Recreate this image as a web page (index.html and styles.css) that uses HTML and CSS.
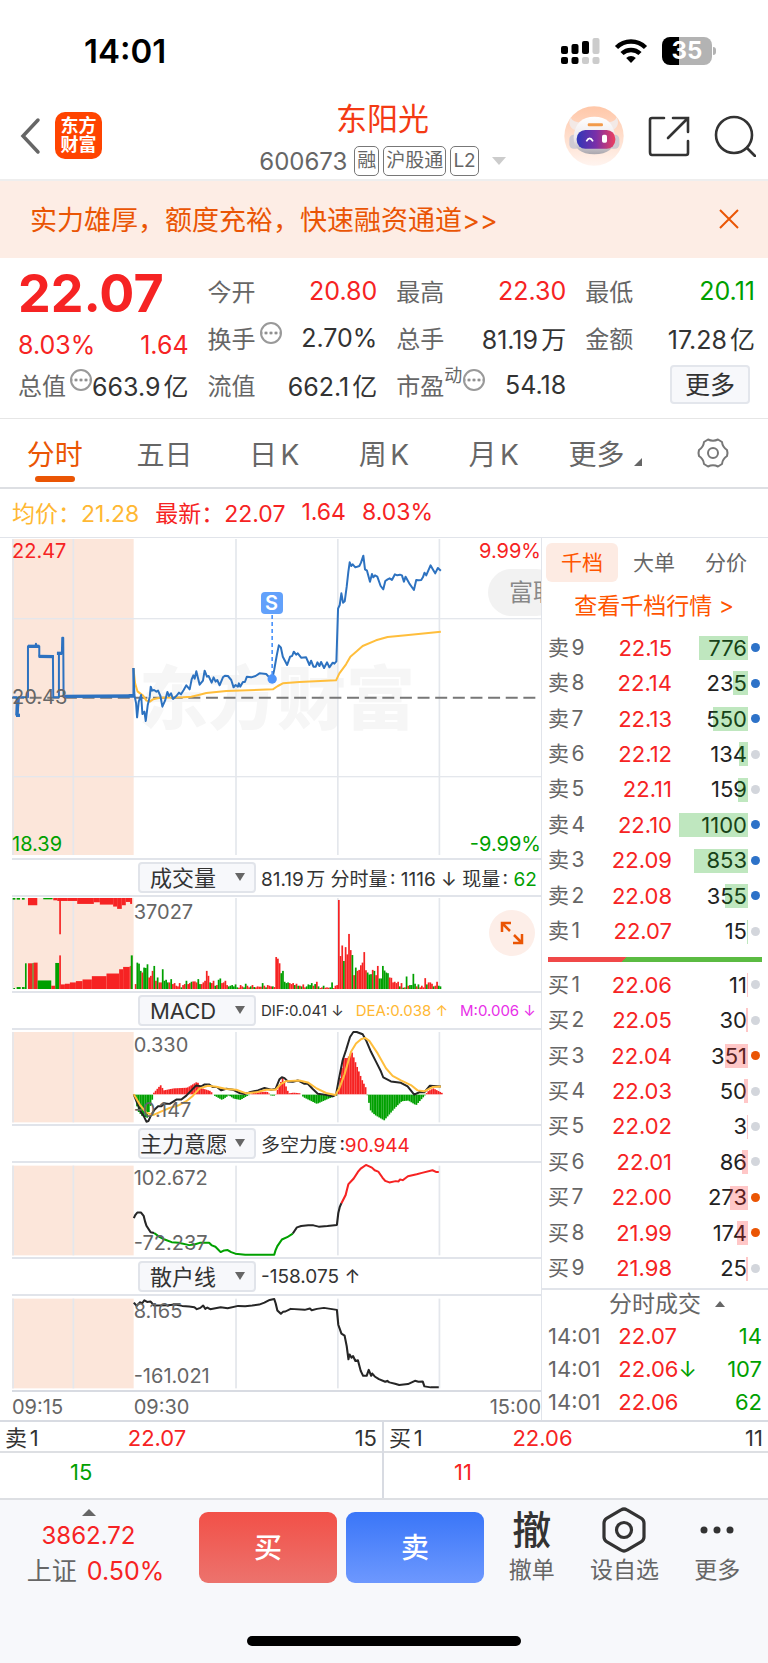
FILE: index.html
```html
<!DOCTYPE html>
<html lang="zh-CN">
<head>
    <meta charset="UTF-8">
    <meta name="viewport" content="width=device-width, initial-scale=1.0">
    <title>东阳光 600673</title>
    <link rel="stylesheet" href="styles.css">
</head>
<body>
    <div class="statusbar">
        <span class="clock">14:01</span>
        <div class="status-icons">
            <svg width="40" height="28" viewBox="0 0 40 28">
                <g fill="#000">
                    <rect x="1" y="9" width="7" height="8" rx="2"/>
                    <rect x="11.500" y="7" width="7" height="10" rx="2"/>
                    <rect x="22" y="4" width="7" height="13" rx="2"/>
                    <rect x="1" y="20" width="7" height="7" rx="2"/>
                    <rect x="11.500" y="20" width="7" height="7" rx="2"/>
                </g>
                <g fill="#ccc">
                    <rect x="32.500" y="1" width="7" height="16" rx="2"/>
                    <rect x="22" y="20" width="7" height="7" rx="2"/>
                    <rect x="32.500" y="20" width="7" height="7" rx="2"/>
                </g>
            </svg>
            <svg width="34" height="26" viewBox="0 0 34 26" fill="none" stroke="#000" stroke-width="4.500">
                <path d="M2.500 9.500a20.500 20.500 0 0 1 29 0"/>
                <path d="M8 15.500a13 13 0 0 1 18 0"/>
                <path d="M17 25l-4.800-5a7 7 0 0 1 9.600 0z" fill="#000" stroke="none"/>
            </svg>
            <div class="battery"><span>35</span></div>
        </div>
    </div>

    <header class="topbar">
        <div class="topbar-left">
            <button class="icon-btn" aria-label="返回">
                <svg width="22" height="38" viewBox="0 0 22 38" fill="none" stroke="#666" stroke-width="3.500"><path d="M19 3L4 19l15 16" stroke-linecap="round"/></svg>
            </button>
            <a class="logo" href="#">东方<br>财富</a>
        </div>
        <div class="topbar-center">
            <h1>东阳光</h1>
            <div class="stock-code">
                <span class="code">600673</span>
                <span class="tag">融</span>
                <span class="tag">沪股通</span>
                <span class="tag">L2</span>
                <svg width="14" height="8" viewBox="0 0 14 8"><path d="M0 0h14L7 8z" fill="#ccc"/></svg>
            </div>
        </div>
        <div class="topbar-right">
            <button class="icon-btn" aria-label="助手">
                <svg width="60" height="60" viewBox="0 0 180 180">
                    <defs>
                        <linearGradient id="halo" x1="0" y1="0" x2="0" y2="1"><stop offset="0" stop-color="#ffc7a8"/><stop offset="1" stop-color="#fff4ef"/></linearGradient>
                        <linearGradient id="visor" x1="0" y1="0" x2="1" y2="0"><stop offset="0" stop-color="#2f37b8"/><stop offset=".5" stop-color="#7a2fa8"/><stop offset="1" stop-color="#ee3f5e"/></linearGradient>
                        <linearGradient id="shell" x1="0" y1="0" x2="0" y2="1"><stop offset="0" stop-color="#fff"/><stop offset=".6" stop-color="#ece7ea"/><stop offset="1" stop-color="#a9a6ad"/></linearGradient>
                    </defs>
                    <circle cx="90" cy="90" r="89" fill="url(#halo)"/>
                    <path d="M20 34c-8 14-4 32 12 38l22-22c-18 0-30-5-34-16zM158 34c8 14 4 32-12 38l-22-22c18 0 30-5 34-16z" fill="#f3e9e6"/>
                    <rect x="16" y="86" width="32" height="42" rx="13" fill="#cfcbd2"/>
                    <rect x="134" y="86" width="32" height="42" rx="13" fill="#cfcbd2"/>
                    <path d="M91 32c36 0 60 20 62 62 1 34-22 51-62 51s-63-17-62-51c2-42 26-62 62-62z" fill="url(#shell)"/>
                    <rect x="71" y="52" width="46" height="9" rx="4" fill="#f29a4a"/>
                    <rect x="38" y="72" width="116" height="56" rx="26" fill="url(#visor)"/>
                    <path d="M67 106q10-18 20 0" fill="none" stroke="#fff" stroke-width="5"/>
                    <rect x="114" y="86" width="15" height="24" rx="5" fill="#fff"/>
                </svg>
            </button>
            <button class="icon-btn" aria-label="分享">
                <svg width="42" height="42" viewBox="0 0 42 42" fill="none" stroke="#333" stroke-width="2.600" stroke-linecap="round">
                    <path d="M16 3H4q-2 0-2 2v32q0 3 2 3h34q2 0 2-2V26M25 3h15v14M39 4L20 23"/>
                </svg>
            </button>
            <button class="icon-btn" aria-label="搜索">
                <svg width="42" height="42" viewBox="0 0 42 42" fill="none" stroke="#333" stroke-width="2.600" stroke-linecap="round">
                    <circle cx="20" cy="20" r="18"/><path d="M33 33l8 8"/>
                </svg>
            </button>
        </div>
    </header>

    <div class="banner">
        <a href="#">实力雄厚，额度充裕，快速融资通道&gt;&gt;</a>
        <button class="icon-btn" aria-label="关闭">
            <svg width="20" height="20" viewBox="0 0 20 20" stroke="#ea5504" stroke-width="2"><path d="M1 1l18 18M19 1L1 19"/></svg>
        </button>
    </div>

    <section class="quote">
        <div class="quote-col">
            <div class="price red">22.07</div>
            <div class="row change red"><span>8.03%</span><span>1.64</span></div>
            <div class="row"><span class="name">总值<i class="dots"></i></span><span>663.9亿</span></div>
        </div>
        <div class="quote-col">
            <div class="row"><span class="name">今开</span><span class="red">20.80</span></div>
            <div class="row"><span class="name">换手<i class="dots"></i></span><span>2.70%</span></div>
            <div class="row"><span class="name">流值</span><span>662.1亿</span></div>
        </div>
        <div class="quote-col">
            <div class="row"><span class="name">最高</span><span class="red">22.30</span></div>
            <div class="row"><span class="name">总手</span><span>81.19万</span></div>
            <div class="row"><span class="name">市盈<sup>动</sup><i class="dots"></i></span><span>54.18</span></div>
        </div>
        <div class="quote-col">
            <div class="row"><span class="name">最低</span><span class="green">20.11</span></div>
            <div class="row"><span class="name">金额</span><span>17.28亿</span></div>
            <div class="row row-end"><button class="more-btn">更多</button></div>
        </div>
    </section>

    <nav class="tabs">
        <button class="active">分时</button>
        <button>五日</button>
        <button>日K</button>
        <button>周K</button>
        <button>月K</button>
        <button class="more">更多<svg width="8" height="8" viewBox="0 0 8 8"><path d="M8 0v8H0z" fill="#666"/></svg></button>
        <button aria-label="设置">
            <svg width="32" height="32" viewBox="0 0 32 32" fill="none" stroke="#777" stroke-width="2">
                <path d="M11 2.500q5 2.500 10 0l4 2.500q.5 5 5 8l.5 3-.5 3q-4.500 3-5 8l-4 2.500q-5-2.500-10 0L7 27q-.5-5-5-8l-.5-3 .5-3q4.500-3 5-8z" stroke-linejoin="round"/>
                <circle cx="16" cy="16" r="5"/>
            </svg>
        </button>
    </nav>

    <div class="summary">
        <span class="orange">均价：21.28</span>
        <span class="red">最新：22.07</span>
        <span class="red">1.64</span>
        <span class="red">8.03%</span>
    </div>

    <main class="main">
        <div class="charts">
            <div class="chart price-chart">
                <span class="watermark">东方财富</span>
                <svg id="priceChart" viewBox="36 24 1590 960" preserveAspectRatio="none"></svg>
                <span class="label top red">22.47</span>
                <span class="label middle">20.43</span>
                <span class="label bottom green">18.39</span>
                <span class="label top right red">9.99%</span>
                <span class="label bottom right green">-9.99%</span>
                <span class="pill">富联</span>
                <span class="marker">S</span>
            </div>

            <div class="chart-head">
                <label class="picker"><select aria-label="指标一"><option>成交量</option></select></label>
                <span class="info">81.19万 分时量: 1116 ↓ 现量: <b class="green">62</b></span>
            </div>
            <div class="chart">
                <svg id="volumeChart" viewBox="36 138 1590 285" preserveAspectRatio="none"></svg>
                <span class="label top inner">37027</span>
                <button class="expand" aria-label="全屏">
                    <svg width="24" height="24" viewBox="0 0 24 24" fill="none" stroke="#ea5504" stroke-width="2.500"><path d="M2 11V2h9M2 2l8 8M22 13v9h-9M22 22l-8-8"/></svg>
                </button>
            </div>

            <div class="chart-head">
                <label class="picker"><select aria-label="指标二"><option>MACD</option></select></label>
                <span class="info small"><span>DIF:0.041 ↓</span><span class="orange">DEA:0.038 ↑</span><span class="magenta">M:0.006 ↓</span></span>
            </div>
            <div class="chart">
                <svg id="macdChart" viewBox="36 539 1590 285" preserveAspectRatio="none"></svg>
                <span class="label top inner">0.330</span>
                <span class="label bottom inner">-0.147</span>
            </div>

            <div class="chart-head">
                <label class="picker"><select aria-label="指标三"><option>主力意愿</option></select></label>
                <span class="info">多空力度:<b class="red">90.944</b></span>
            </div>
            <div class="chart">
                <svg id="forceChart" viewBox="34 98 1511 285" preserveAspectRatio="none"></svg>
                <span class="label top inner">102.672</span>
                <span class="label bottom inner">-72.237</span>
            </div>

            <div class="chart-head">
                <label class="picker"><select aria-label="指标四"><option>散户线</option></select></label>
                <span class="info">-158.075 ↑</span>
            </div>
            <div class="chart">
                <svg id="retailChart" viewBox="34 498 1511 285" preserveAspectRatio="none"></svg>
                <span class="label top inner">8.165</span>
                <span class="label bottom inner">-161.021</span>
            </div>

            <div class="times"><span>09:15</span><span>09:30</span><span>15:00</span></div>
        </div>

        <aside class="side">
            <div class="side-tabs">
                <button class="active">千档</button>
                <button>大单</button>
                <button>分价</button>
            </div>
            <a class="side-link" href="#">查看千档行情 &gt;</a>
            <table class="book sell"><tbody id="sellBook"></tbody></table>
            <div class="ratio"></div>
            <table class="book buy"><tbody id="buyBook"></tbody></table>
            <button class="deals-title">分时成交<svg width="10" height="6" viewBox="0 0 10 6"><path d="M5 0l5 6H0z" fill="#666"/></svg></button>
            <table class="deals">
                <tbody>
                    <tr><td>14:01</td><td class="red">22.07</td><td class="green">14</td></tr>
                    <tr><td>14:01</td><td class="red">22.06<span class="green">↓</span></td><td class="green">107</td></tr>
                    <tr><td>14:01</td><td class="red">22.06</td><td class="green">62</td></tr>
                </tbody>
            </table>
        </aside>
    </main>

    <section class="level">
        <div class="level-side">
            <div class="level-row"><span>卖1</span><span class="red">22.07</span><span>15</span></div>
            <div class="level-queue green">15</div>
        </div>
        <div class="level-side">
            <div class="level-row"><span>买1</span><span class="red">22.06</span><span>11</span></div>
            <div class="level-queue red">11</div>
        </div>
    </section>

    <footer class="footer">
        <div class="actions">
            <button class="index">
                <svg width="14" height="7" viewBox="0 0 14 7"><path d="M7 0l7 7H0z" fill="#666"/></svg>
                <span class="red">3862.72</span>
                <span class="index-change">上证 <b class="red">0.50%</b></span>
            </button>
            <button class="trade buy-btn">买</button>
            <button class="trade sell-btn">卖</button>
            <button class="tool"><span class="glyph">撤</span>撤单</button>
            <button class="tool">
                <svg width="44" height="46" viewBox="0 0 44 46" fill="none" stroke="#333" stroke-width="3.200">
                    <path d="M19 3q3-2 6 0l14 8q3 2 3 5v14q0 3-3 5l-14 8q-3 2-6 0L5 35q-3-2-3-5V16q0-3 3-5z"/>
                    <circle cx="22" cy="23" r="7.500"/>
                </svg>
                设自选
            </button>
            <button class="tool">
                <svg width="44" height="46" viewBox="0 0 44 46" fill="#333"><circle cx="9" cy="23" r="3.500"/><circle cx="22" cy="23" r="3.500"/><circle cx="35" cy="23" r="3.500"/></svg>
                更多
            </button>
        </div>
        <div class="home-bar"></div>
    </footer>

    <script src="charts.js"></script>
</body>
</html>
```
FILE: styles.css
```css
* {
    box-sizing: border-box;
}
body {
    margin: 0;
    background: #fff;
    color: #333;
    font-family: Inter, "Noto Sans CJK SC", sans-serif;
    font-size: 24px;
    text-autospace: normal;
}
button, select {
    font: inherit;
    color: inherit;
    background: none;
    border: none;
    padding: 0;
    margin: 0;
}
a {
    text-decoration: none;
}
svg {
    display: block;
}
b, i {
    font-weight: normal;
    font-style: normal;
}
.red { color: #f62323; }
.green { color: #00a000; }
.orange { color: #ffb833; }
.magenta { color: #e830e8; }

/* status bar */
.statusbar {
    display: flex;
    justify-content: space-between;
    align-items: center;
    height: 100px;
    padding: 2px 56px 0 84px;
}
.clock {
    font-size: 33px;
    font-weight: 600;
    color: #000;
}
.status-icons {
    display: flex;
    align-items: center;
    gap: 14px;
}
.battery {
    position: relative;
    width: 50px;
    height: 28px;
    border-radius: 8px;
    background: linear-gradient(to right, #000 35%, #b3b3b3 35%);
    color: #fff;
    font-size: 24px;
    font-weight: 700;
    line-height: 28px;
    text-align: center;
}
.battery::after {
    content: "";
    position: absolute;
    right: -4px;
    top: 10px;
    width: 3px;
    height: 8px;
    border-radius: 0 3px 3px 0;
    background: #b3b3b3;
}

/* top bar */
.topbar {
    display: grid;
    grid-template-columns: 1fr auto 1fr;
    height: 81px;
    padding: 0 12px 0 19px;
    border-bottom: 2px solid #eee;
}
.topbar-left, .topbar-right {
    display: flex;
    align-items: center;
    padding-bottom: 8px;
}
.topbar-left {
    gap: 14px;
}
.topbar-right {
    justify-content: flex-end;
    gap: 24px;
}
.logo {
    width: 47px;
    height: 47px;
    padding-top: 4px;
    border-radius: 10px;
    background: #ff4400;
    color: #fff;
    font-size: 18px;
    font-weight: 700;
    line-height: 19px;
    text-align: center;
}
.topbar-center {
    display: flex;
    flex-direction: column;
    align-items: center;
    gap: 9px;
    padding-right: 10px;
}
h1 {
    margin: 0;
    color: #f43a14;
    font-size: 31px;
    font-weight: 400;
    line-height: 37px;
}
.stock-code {
    display: flex;
    align-items: center;
    gap: 4px;
    color: #666;
}
.stock-code svg {
    margin-left: 9px;
}
.code {
    margin-right: 3px;
}
.tag {
    height: 30px;
    padding: 0 2px;
    border: 1px solid #777;
    border-radius: 5px;
    font-size: 19px;
    line-height: 28px;
}

.banner {
    display: flex;
    justify-content: space-between;
    align-items: center;
    height: 77px;
    padding: 0 29px 2px 30px;
    background: #fdede5;
}
.banner a {
    color: #ea5504;
    font-size: 27px;
}

/* quote */
.quote {
    display: grid;
    grid-template-columns: repeat(4, 1fr);
    gap: 19px;
    padding: 9px 13px 10px 18px;
    border-bottom: 1px solid #e6e6e6;
}
.price {
    height: 61px;
    font-size: 52px;
    font-weight: 700;
    line-height: 54px;
}
.row {
    display: flex;
    justify-content: space-between;
    align-items: center;
    height: 47px;
    font-size: 25px;
    white-space: nowrap;
}
.row.change {
    height: 33px;
}
.row-end {
    justify-content: flex-end;
    padding-right: 5px;
}
.name {
    display: flex;
    align-items: center;
    color: #666;
    font-size: 24px;
}
.name sup {
    font-size: 18px;
    line-height: 18px;
    align-self: flex-start;
}
.dots {
    width: 22px;
    height: 22px;
    margin: 0 0 10px 4px;
    border: 2px solid #999;
    border-radius: 50%;
    background: radial-gradient(circle, #888 1px, transparent 2px) center / 5px 18px;
    background-repeat: repeat-x;
}
sup + .dots {
    margin-left: 1px;
}
.more-btn {
    width: 80px;
    height: 39px;
    border: 2px solid #e3e6ec;
    border-radius: 4px;
    background: #f7f8fb;
    line-height: 32px;
}

/* period tabs */
.tabs {
    display: grid;
    grid-template-columns: repeat(7, 1fr);
    height: 70px;
    border-bottom: 2px solid #dddfe3;
}
.tabs button {
    position: relative;
    display: flex;
    align-items: center;
    justify-content: center;
    font-size: 28px;
    color: #666;
}
.tabs .active {
    color: #ea5504;
}
.tabs .active::after {
    content: "";
    position: absolute;
    bottom: 5px;
    width: 40px;
    height: 6px;
    border-radius: 3px;
    background: #ea5504;
}
.tabs .more {
    padding-left: 4px;
}
.tabs .more svg {
    margin: 18px 0 0 10px;
}
.summary {
    display: flex;
    align-items: center;
    gap: 16px;
    height: 48px;
    padding: 0 0 2px 12px;
    font-size: 23px;
}

/* charts */
.main {
    display: grid;
    grid-template-columns: minmax(0, 1fr) 226px;
    border-bottom: 2px solid #d8dbe2;
}
.charts {
    padding-left: 12px;
    border-top: 1px solid #e1e4ea;
    border-right: 1px solid #e1e4ea;
}
.chart {
    position: relative;
    height: 94px;
    overflow: hidden;
}
.chart > svg {
    position: relative;
    width: 100%;
    height: 100%;
}
.price-chart {
    height: 320px;
}
.label {
    position: absolute;
    left: 0;
    color: #666;
    font-size: 20px;
    line-height: 24px;
}
.label.red { color: #f62323; }
.label.green { color: #00a000; }
.label.top { top: 1px; }
.label.middle { top: 147px; }
.label.bottom { bottom: 2px; }
.label.right {
    left: auto;
    right: 0;
}
.label.inner {
    left: 23%;
}
.label.top.inner {
    top: 3px;
}
.watermark {
    position: absolute;
    left: 24%;
    top: 106px;
    color: #f6f6f6;
    font-family: "Noto Sans CJK SC", sans-serif;
    font-size: 69px;
    font-weight: 900;
    line-height: 100px;
}
.pill {
    position: absolute;
    right: -19px;
    top: 31px;
    padding: 0 3px 0 21px;
    border-radius: 24px;
    background: #f2f2f2;
    color: #888;
    font-size: 24px;
    line-height: 47px;
}
.marker {
    position: absolute;
    left: 47%;
    top: 54px;
    width: 22px;
    border-radius: 4px;
    background: #62a1fb;
    color: #fff;
    font-size: 20px;
    font-weight: 600;
    line-height: 22px;
    text-align: center;
}
.expand {
    position: absolute;
    right: 6px;
    top: 13px;
    display: grid;
    place-items: center;
    width: 46px;
    height: 46px;
    border-radius: 50%;
    background: #fdeee8;
}
.chart-head {
    display: flex;
    align-items: center;
    gap: 5px;
    height: 39px;
    padding-left: 126px;
    border-top: 2px solid #e1e4ea;
    border-bottom: 2px solid #e1e4ea;
}
.picker {
    position: relative;
}
.picker::after {
    content: "";
    position: absolute;
    right: 11px;
    top: 11px;
    border: 5px solid transparent;
    border-top: 8px solid #666;
    border-bottom: none;
}
.picker select {
    appearance: none;
    display: block;
    width: 118px;
    height: 31px;
    padding-right: 28px;
    border: 2px solid #e1e4ea;
    border-radius: 4px;
    background: #f7f8fb;
    font-size: 22px;
    text-align-last: center;
}
.info {
    font-size: 19px;
    white-space: nowrap;
}
.info.small {
    display: flex;
    gap: 12px;
    font-size: 15px;
}
.times {
    display: grid;
    grid-template-columns: 23% 1fr auto;
    height: 30px;
    border-top: 2px solid #d8dbe2;
    color: #666;
    font-size: 20px;
    line-height: 30px;
}

/* order book */
.side {
    padding: 5px 6px 0 4px;
    border-top: 1px solid #e1e4ea;
}
.side-tabs {
    display: grid;
    grid-template-columns: repeat(3, 1fr);
    height: 39px;
    color: #666;
    font-size: 21px;
}
.side-tabs button {
    padding-bottom: 4px;
}
.side-tabs .active {
    border-radius: 6px;
    background: #fdebe3;
    color: #ff5500;
}
.side-link {
    display: block;
    color: #ff5500;
    font-size: 23px;
    line-height: 48px;
    text-align: center;
}
.book, .deals {
    width: 100%;
    border-collapse: collapse;
    font-size: 22px;
    line-height: 24px;
}
.book {
    height: 319px;
}
td {
    padding: 0;
    text-align: right;
}
td:first-child {
    width: 54px;
    padding-left: 2px;
    color: #666;
    text-align: left;
}
.book td:first-child {
    font-size: 21px;
}
.book .qty {
    position: relative;
    width: 75px;
    color: #222;
}
.bar {
    position: absolute;
    right: -1px;
    top: 6px;
    height: 24px;
}
.sell .bar { background: rgba(0, 160, 0, 0.25); }
.buy .bar { background: rgba(255, 30, 30, 0.25); }
.book .mark {
    width: 15px;
}
.dot {
    display: block;
    width: 9px;
    height: 9px;
    margin: 0 2px 0 auto;
    border-radius: 50%;
    background: #d3d6dc;
}
.sell .dot.big { background: #2d72c8; }
.buy .dot.big { background: #ea5504; }
.ratio {
    height: 5px;
    margin: 8px 0 5px 2px;
    background: linear-gradient(135deg, #f04848 36%, #5bbb42 36%);
}
.deals-title {
    display: flex;
    align-items: center;
    justify-content: center;
    gap: 14px;
    width: calc(100% + 10px);
    height: 31px;
    margin: 2px -6px 0 -4px;
    padding: 0 0 2px 24px;
    border-top: 2px solid #e1e4ea;
    color: #666;
    font-size: 23px;
    line-height: 26px;
}
.deals {
    height: 100px;
}
.deals td:nth-child(2) {
    width: 90px;
    padding-left: 18px;
    text-align: left;
    white-space: nowrap;
}

/* first level */
.level {
    display: grid;
    grid-template-columns: 1fr 1fr;
    border-bottom: 2px solid #dddfe3;
    font-size: 22px;
}
.level-side:first-child {
    border-right: 2px solid #d8dbe2;
}
.level-row {
    display: grid;
    grid-template-columns: 33% 1fr auto;
    height: 31px;
    padding: 0 5px;
    border-bottom: 2px solid #dddfe3;
    line-height: 32px;
}
.level-queue {
    height: 45px;
    padding-left: 70px;
    line-height: 38px;
}

/* footer */
.footer {
    height: 164px;
    background: #f7f8fb;
}
.actions {
    display: grid;
    grid-template-columns: 181px 138px 138px repeat(3, 1fr);
    column-gap: 9px;
    padding: 12px 6px 0 9px;
    color: #666;
}
.index {
    display: flex;
    flex-direction: column;
    align-items: center;
    gap: 3px;
    padding-right: 22px;
    line-height: 33px;
}
.index svg {
    margin-top: -3px;
}
.index-change {
    display: flex;
    gap: 10px;
    padding-left: 14px;
    font-size: 25px;
}
.trade {
    height: 71px;
    padding-bottom: 4px;
    border-radius: 9px;
    color: #fff;
    font-size: 28px;
    font-weight: 500;
}
.buy-btn { background: linear-gradient(#f25048, #ec736d); }
.sell-btn { background: linear-gradient(#3a76f8, #6d98fe); }
.tool {
    display: flex;
    flex-direction: column;
    align-items: center;
    gap: 4px;
    margin: -5px 0 0 -6px;
    font-size: 23px;
    line-height: 26px;
    white-space: nowrap;
}
.glyph {
    color: #333;
    font-size: 39px;
    font-weight: 500;
    line-height: 46px;
}
.home-bar {
    width: 274px;
    height: 10px;
    margin: 48px auto 0;
    border-radius: 5px;
    background: #000;
}
```
FILE: charts.js
```js
const RED = "#f62323";
const GREEN = "#00a000";
const BLUE = "#2d72c0";
const ORANGE = "#ffbe3c";
const BLACK = "#262626";

const rect = (x, y, w, h, fill) => `<rect x="${x}" y="${y}" width="${w}" height="${h}" fill="${fill}"/>`;
const line = (points, color, width = 6) => `<polyline points="${points}" fill="none" stroke="${color}" stroke-width="${width}" stroke-linejoin="round"/>`;

// call auction background and vertical grid lines
function grid(x, y, w, h) {
    let out = rect(x, y, w * 0.23, h, "#fce6da");
    [0.001, 0.115, 0.4225, 0.615, 0.807].forEach(p => {
        out += rect(x + w * p - 1, y, 5, h, "#e4e7ec");
    });
    return out;
}

// price
const auction = "38,502 50,502 50,556 54,530 56,502 84,502 84,349 107,349 108,341 110,349 118,349 118,379 159,380 160,502 177,502 177,370 186,370 187,323 190,323 191,499 385,499 390,495 401,495 401,414";
const price = "401,414 404,495 409,520 412,562 417,515 424,495 428,552 434,545 438,573 444,525 450,500 453,470 457,482 463,480 470,485 475,482 482,498 488,530 496,512 503,486 508,498 514,490 520,507 530,498 538,488 544,493 552,480 560,466 570,478 576,448 581,436 585,446 590,424 600,464 610,452 615,422 622,440 627,438 636,458 642,442 648,455 653,450 660,466 670,442 676,437 685,438 695,450 702,472 708,465 715,470 718,460 722,470 730,456 736,456 742,440 755,442 768,438 780,430 800,432 810,443 818,447 824,420 832,375 838,346 844,352 850,380 863,405 872,380 878,378 883,365 890,374 895,370 905,383 920,382 930,405 935,392 942,410 949,410 954,397 960,408 965,396 974,414 983,397 990,412 1000,398 1005,401 1011,394 1016,236 1021,225 1026,190 1031,218 1036,214 1042,170 1047,125 1051,97 1056,108 1060,103 1068,112 1080,108 1085,98 1092,77 1097,118 1103,122 1112,155 1118,132 1122,142 1127,136 1134,140 1144,168 1152,178 1158,153 1165,148 1171,145 1178,150 1187,133 1194,136 1202,134 1208,136 1214,155 1219,140 1230,160 1244,180 1251,150 1258,151 1266,150 1271,142 1276,128 1281,136 1294,106 1302,120 1308,130 1316,114 1325,122";
const average = "401,414 406,460 413,484 430,497 440,512 450,515 460,508 480,503 550,502 575,500 600,494 620,489 680,483 820,478 835,468 850,460 900,456 1010,451 1020,430 1040,403 1053,380 1072,364 1090,348 1130,331 1165,321 1220,316 1325,305";

document.querySelector("#priceChart").innerHTML =
    grid(36, 27, 1590, 948) +
    rect(36, 264, 1590, 4, "#e4e7ec") + rect(36, 738, 1590, 4, "#e4e7ec") +
    '<path d="M36 503H1626" stroke="#777" stroke-width="6" stroke-dasharray="36 17"/>' +
    line(average, ORANGE) + line(auction, BLUE) + line(price, BLUE) +
    line("84,349 118,349", BLUE, 10) + line("116,379 162,380", BLUE, 10) + line("191,499 404,498", BLUE, 10) +
    line("171,370 187,370", BLUE, 10) + line("48,556 60,556", BLUE, 10) + line("51,556 54,505", BLUE, 10) +
    '<path d="M818 255V436" stroke="#4d94fa" stroke-width="5" stroke-dasharray="12 9"/>' +
    '<circle cx="818" cy="447" r="14" fill="#4d94fa"/>';

// volume: one value per minute, negative = falling
const volume = [15, -80, -77, -55, 50, -65, -64, -75, 35, 40, 55, -70, 25, -35, 20, 20, -60, -25, -28, -20, 20, -30, 15, 18, 10, 8, 18, -5, 12, 15,
    -25, 15, 18, -22, 23, 23, 20, -30, -15, 15, 20, 25, 55, 40, -20, 18, 25, -10, 12, -28, -32, 18, 20, 25, 12, -8, -10, -12, -8, -14,
    -5, 4, 12, 8, -5, -16, 10, 5, -8, 12, -6, 5, 8, 7, 7, -18, 10, -5, 12, 10, 8, -8, 6, 97, 92, 78, -48, -55, -22, -18,
    -20, 18, 15, 18, -12, 16, -10, 10, -8, 14, 5, -8, -14, -12, -18, 10, -15, 22, -8, 3, 5, -10, 4, 5, 4, -5, -20, 3, 10, 12,
    270, 100, 132, -85, 127, 105, 167, 118, -103, 42, -65, 55, 58, 72, 80, 112, 57, -50, -44, -45, 58, -55, 42, 70, -32, -32, -70, -56, -50, -48,
    35, 34, 20, 22, 18, 22, -8, 18, -4, 5, -38, 10, -12, -12, -46, -16, 8, -14, 5, 10, 5, 33, -14, 20, 20, 16, -8, 10, 22, -10, -8];

let bars = grid(36, 141, 1590, 276);
volume.forEach((v, i) => {
    bars += rect(405 + i * 5.09, 417 - Math.abs(v), 5.2, Math.abs(v), v > 0 ? RED : GREEN);
});
// call auction: matched volume below, unmatched above
[[40, 5, 3, 0], [50, 12, 6, 0], [66, 8, 6, 0], [75, 5, 78, 0], [84, 14, 78, 1], [98, 3, 79, 0], [101, 12, 80, 1], [113, 41, 26, 0], [154, 12, 10, 1], [166, 12, 79, 0], [178, 5, 102, 1],
    [183, 12, 14, 1], [195, 15, 16, 1], [210, 18, 20, 1], [228, 20, 24, 1], [248, 28, 29, 1], [276, 44, 39, 1], [320, 38, 47, 1], [358, 12, 60, 1], [370, 20, 67, 1], [390, 3, 70, 1], [393, 6, 102, 0]].forEach(([x, w, h, up]) => {
    bars += rect(x, 417 - h, w, h, up ? RED : GREEN);
});
[[38, 8, 5, 0], [50, 10, 5, 0], [66, 8, 5, 0], [84, 28, 22, 1], [130, 28, 4, 0], [160, 12, 7, 1], [172, 30, 9, 1], [178, 5, 110, 1], [202, 30, 9, 1], [232, 50, 18, 1], [282, 18, 13, 1], [300, 40, 20, 1], [340, 12, 26, 1], [352, 14, 33, 1], [366, 12, 22, 1], [378, 14, 12, 1], [391, 6, 18, 1]].forEach(([x, w, h, up]) => {
    bars += rect(x, 141, w, h, up ? RED : GREEN);
});
document.querySelector("#volumeChart").innerHTML = bars;

// MACD histogram key points, filled in minute by minute
const hist = [[402, 0], [412, -50], [425, -65], [440, -70], [455, -15], [460, 5], [480, 28], [490, 12], [520, 18], [560, 20], [590, 38], [605, 18], [630, 10], [640, -2], [665, -16], [685, -2], [700, -12], [720, -16], [742, -3], [760, 5], [800, 8], [812, -3], [825, -3], [830, 10], [847, 50], [865, 3], [880, 5], [900, 3], [910, -8], [950, -28], [985, -12], [1010, -2], [1015, 20], [1030, 110], [1042, 110], [1055, 128], [1070, 85], [1085, 45], [1097, 20], [1102, -5], [1112, -50], [1125, -62], [1152, -78], [1185, -40], [1205, -20], [1225, -18], [1248, -32], [1272, -5], [1285, 10], [1300, 18], [1330, 2]];
const dif = "402,734 412,760 422,785 432,800 440,817 446,815 455,795 465,780 475,770 485,770 495,762 510,763 530,750 545,750 560,738 575,722 590,707 605,710 615,704 628,704 640,712 652,712 665,722 680,717 700,720 720,730 735,733 750,728 775,722 795,715 815,720 828,718 840,688 847,682 855,685 865,695 880,696 895,692 915,702 925,702 940,718 955,732 975,735 1000,740 1010,735 1018,690 1030,630 1040,600 1052,560 1062,545 1072,545 1090,552 1100,570 1115,605 1130,635 1145,665 1152,683 1175,695 1205,699 1225,710 1245,735 1262,727 1275,728 1292,708 1325,710";
const dea = "402,734 420,765 440,790 460,797 480,788 510,775 535,768 560,755 580,738 600,716 625,708 650,711 680,718 710,720 740,731 770,728 800,720 828,720 845,702 860,694 900,692 925,698 950,715 980,730 1008,736 1020,715 1035,675 1055,605 1070,580 1085,567 1097,563 1110,572 1135,610 1160,655 1180,678 1205,692 1235,706 1255,722 1275,725 1300,712 1325,710";

bars = grid(36, 545, 1590, 274);
for (let x = 404; x < 1328; x += 5.09) {
    const i = hist.findIndex(p => p[0] > x);
    const [x0, h0] = hist[i - 1];
    const [x1, h1] = hist[i];
    const h = h0 + (h1 - h0) * (x - x0) / (x1 - x0);
    bars += rect(x, h > 0 ? 734 - h : 735, 5.2, Math.abs(h), h > 0 ? RED : GREEN);
}
document.querySelector("#macdChart").innerHTML = bars + line(dif, BLACK) + line(dea, ORANGE);

document.querySelector("#forceChart").innerHTML =
    grid(34, 106, 1511, 272) +
    line("382,265 386,256 392,248 402,248 410,258 414,275 418,288 430,308 440,310", BLACK) +
    line("440,310 455,322 470,330 490,338 510,340 540,347 555,345 570,340 597,340 605,348 615,352 630,368 640,363 650,362 660,368 672,373 700,376 783,376 787,362 792,350 805,330 820,323 836,312", GREEN) +
    line("836,312 848,293 860,289 880,287 895,287 910,291 935,289 962,286 966,250 970,232 975,220", BLACK) +
    line("975,220 987,195 991,178 995,162 1010,145 1022,125 1030,115 1045,104 1062,112 1070,120 1080,124 1092,142 1100,152 1112,157 1130,153 1138,154 1142,148 1150,150 1165,138 1190,132 1205,128 1235,120 1245,125 1253,125", RED);

document.querySelector("#retailChart").innerHTML =
    grid(34, 506, 1511, 272) +
    line("382,518 390,528 400,517 406,520 412,511 420,516 430,515 440,527 480,526 500,524 520,528 540,530 555,532 562,538 572,534 580,527 586,537 592,533 600,538 630,532 650,535 680,528 700,529 720,527 740,524 755,518 770,510 783,507 787,520 792,542 802,552 808,546 815,545 830,537 870,540 885,536 890,541 905,537 925,534 962,540 966,585 975,612 984,618 990,650 995,690 998,675 1004,685 1008,680 1015,695 1022,693 1030,725 1037,740 1047,740 1053,722 1060,740 1063,733 1070,742 1082,750 1100,758 1106,755 1112,760 1128,764 1140,768 1165,765 1185,755 1195,758 1207,757 1212,772 1230,775 1253,775", BLACK);

// order book
const sell = [[9, "22.15", 776, 1], [8, "22.14", 235, 1], [7, "22.13", 550, 1], [6, "22.12", 134, 0], [5, "22.11", 159, 0], [4, "22.10", 1100, 1], [3, "22.09", 853, 1], [2, "22.08", 355, 1], [1, "22.07", 15, 0]];
const buy = [[1, "22.06", 11, 0], [2, "22.05", 30, 0], [3, "22.04", 351, 1], [4, "22.03", 50, 0], [5, "22.02", 3, 0], [6, "22.01", 86, 0], [7, "22.00", 273, 1], [8, "21.99", 174, 1], [9, "21.98", 25, 0]];

function renderBook(selector, name, rows) {
    document.querySelector(selector).innerHTML = rows.map(([level, price, qty, big]) => `
        <tr>
            <td>${name}${level}</td>
            <td class="red">${price}</td>
            <td class="qty">${qty}<span class="bar" style="width: ${Math.ceil(qty / 1100 * 69)}px"></span></td>
            <td class="mark"><span class="dot ${big ? "big" : ""}"></span></td>
        </tr>`).join("");
}
renderBook("#sellBook", "卖", sell);
renderBook("#buyBook", "买", buy);
```
